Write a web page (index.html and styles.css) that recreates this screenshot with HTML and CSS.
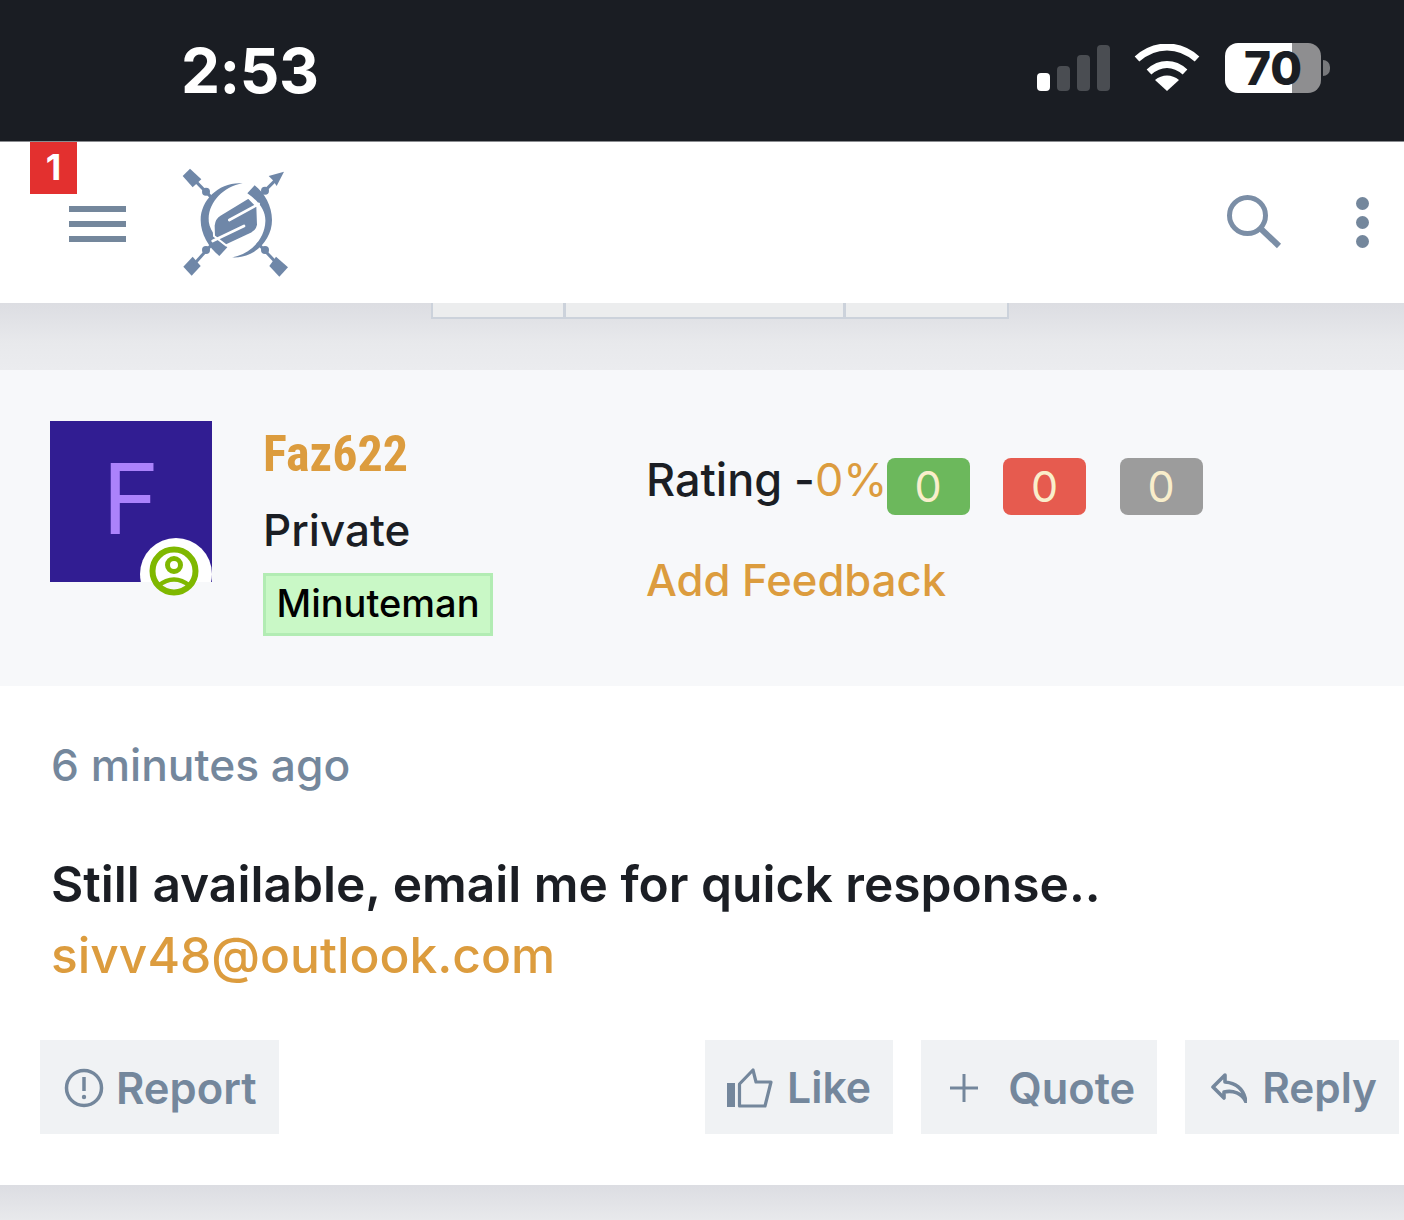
FILE: index.html
```html
<!DOCTYPE html>
<html>

<head>
	<meta charset="utf-8" />
	<title>Post</title>
	<link rel="stylesheet" href="styles.css">
</head>

<body>
	<!-- phone status bar -->
	<div class="status">
		<span class="clock">2:53</span>
		<div class="status-icons">
			<svg class="signal" width="74" height="46" viewBox="-1 0 74 46">
				<rect x="0" y="28" width="13" height="18" rx="4" fill="#fff" />
				<rect x="20" y="21" width="13" height="25" rx="4" fill="#4a4d52" />
				<rect x="40" y="10" width="13" height="36" rx="4" fill="#4a4d52" />
				<rect x="60" y="0" width="13" height="46" rx="4" fill="#4a4d52" />
			</svg>
			<svg class="wifi" width="66" height="48" viewBox="0 0 66 48">
				<path d="M3 15C21 -1 45 -1 63 15" fill="none" stroke="#fff" stroke-width="7" />
				<path d="M15 28C26 18 40 18 51 28" fill="none" stroke="#fff" stroke-width="7" />
				<path d="M33 47L21 36C28 30 38 30 45 36Z" fill="#fff" />
			</svg>
			<div class="battery">
				<div class="battery-body"><span>70</span></div>
				<div class="battery-tip"></div>
			</div>
		</div>
	</div>

	<!-- top nav -->
	<div class="nav">
		<div class="nav-left">
			<span class="badge">1</span>
			<div class="burger"><i></i><i></i><i></i></div>
			<svg class="logo" width="130" height="125" viewBox="0 0 390 375">
				<g fill="#6f87a8">
					<path d="M60 26L94 58L68 82L38 48Z" />
					<path d="M342 35L296 48L308 60L320 78Z" />
					<path d="M68 290L92 318L65 347L40 320Z" />
					<path d="M318 290L354 322L328 350L298 318Z" />
					<circle cx="108" cy="95" r="12" />
					<circle cx="285" cy="92" r="12" />
					<circle cx="108" cy="270" r="12" />
					<circle cx="285" cy="270" r="12" />
					<path d="M218 70C150 64 92 118 92 180C92 222 116 262 148 288L172 262C137 235 114 205 116 175C118 125 160 80 218 70Z" />
					<path d="M186 292C254 296 306 240 306 180C306 138 284 100 254 76L232 100C269 125 288 155 286 185C284 235 244 282 186 292Z" />
				</g>
				<g stroke="#6f87a8" stroke-width="9" fill="none">
					<path d="M75 62L130 118" />
					<path d="M315 62L262 115" />
					<path d="M70 315L130 248" />
					<path d="M325 315L262 248" />
				</g>
				<path d="M131 197Q133 175 150 165L235 113L262 140L264 195Q262 210 245 220L168 256L132 228Z" fill="#6f87a8" stroke="#fff" stroke-width="6" />
				<path d="M266 132L178 180M128 243L222 198" fill="none" stroke="#fff" stroke-width="8" stroke-linecap="round" />
			</svg>
		</div>
		<div class="nav-right">
			<svg width="56" height="54" viewBox="0 0 56 54">
				<circle cx="20.5" cy="20.5" r="18" fill="none" stroke="#7b8ea6" stroke-width="5" />
				<path d="M33 33L52 51" stroke="#7b8ea6" stroke-width="6" fill="none" />
			</svg>
			<div class="dots"><i></i><i></i><i></i></div>
		</div>
	</div>

	<!-- bit of the pager hidden under the nav, then the grey gap -->
	<div class="gap">
		<div class="pager"><i class="p1"></i><i class="p2"></i><i class="p3"></i></div>
	</div>

	<div class="post">
		<div class="author">
			<div class="avatar-wrap">
				<div class="avatar">
					<span>F</span>
					<div class="online-bg"></div>
				</div>
				<svg class="online-icon" width="50" height="50" viewBox="0 0 50 50">
					<circle cx="25" cy="25" r="21.5" fill="none" stroke="#7fb800" stroke-width="6" />
					<circle cx="25" cy="19" r="6.5" fill="none" stroke="#7fb800" stroke-width="5" />
					<path d="M9 40Q25 27 41 40" fill="none" stroke="#7fb800" stroke-width="4.5" />
				</svg>
			</div>
			<div class="who">
				<a class="name">Faz622</a>
				<div class="rank">Private</div>
				<span class="tag">Minuteman</span>
			</div>
			<div class="trust">
				<div class="rating">
					<span class="rate-text">Rating -<b>0%</b></span>
					<span class="count green">0</span>
					<span class="count red">0</span>
					<span class="count grey">0</span>
				</div>
				<a class="feedback">Add Feedback</a>
			</div>
		</div>

		<div class="body">
			<div class="time">6 minutes ago</div>
			<p class="msg">Still available, email me for quick response..<br><a>sivv48@outlook.com</a></p>
			<div class="actions">
				<a class="btn report">
					<svg width="40" height="40" viewBox="0 0 40 40">
						<circle cx="20" cy="20" r="17.5" fill="none" stroke="#74879c" stroke-width="3.5" />
						<path d="M20 9V23" stroke="#74879c" stroke-width="3.5" />
						<circle cx="20" cy="29" r="2.2" fill="#74879c" />
					</svg>
					Report
				</a>
				<div class="actions-right">
					<a class="btn like">
						<svg width="46" height="42" viewBox="0 0 46 42">
							<rect x="0" y="16" width="8" height="24" fill="#74879c" />
							<path d="M12.5 39V17L26 3L29 15H44L38 39Z" fill="none" stroke="#74879c" stroke-width="3.2" stroke-linejoin="round" />
						</svg>
						Like
					</a>
					<a class="btn quote">
						<svg width="30" height="30" viewBox="0 0 30 30">
							<path d="M15 1V29M1 15H29" stroke="#74879c" stroke-width="3" />
						</svg>
						Quote
					</a>
					<a class="btn reply">
						<svg width="36" height="30" viewBox="0 0 36 30">
							<path d="M14 2L2 14L13 25V19C22 17 31 20 35 29C33 16 25 10 14 9Z" fill="none" stroke="#74879c" stroke-width="3.6" stroke-linejoin="round" />
						</svg>
						Reply
					</a>
				</div>
			</div>
		</div>
	</div>

	<div class="bottom"></div>
</body>

</html>
```

FILE: styles.css
```css
* {
	margin: 0;
	padding: 0;
	box-sizing: border-box;
}

body {
	width: 1404px;
	height: 1220px;
	overflow: hidden;
	background: #fff;
	font-family: Inter, "Liberation Sans", sans-serif;
	color: #1b1e24;
}

a {
	text-decoration: none;
}

/* status bar */
.status {
	height: 142px;
	background: #1a1d23;
	border-bottom: 1px solid #8a8c90;
	display: flex;
	align-items: center;
	justify-content: space-between;
	padding: 0 74px 0 181px;
}

.clock {
	color: #fff;
	font-size: 62px;
	font-weight: 700;
	letter-spacing: -0.5px;
}

.status-icons {
	display: flex;
	align-items: center;
	gap: 25px;
	margin-bottom: 6px;
}

.signal {
	margin-right: -1px;
}

.battery {
	display: flex;
	align-items: center;
	gap: 2px;
}

.battery-body {
	width: 96px;
	height: 50px;
	border-radius: 13px;
	background: linear-gradient(90deg, #fff 70%, #8e8e90 70%);
	color: #1a1d23;
	font-size: 46px;
	font-weight: 800;
	line-height: 50px;
	text-align: center;
}

.battery-tip {
	width: 7px;
	height: 16px;
	border-radius: 0 8px 8px 0;
	background: #77787b;
}

/* nav */
.nav {
	height: 161px;
	background: #fff;
	display: flex;
	align-items: center;
	justify-content: space-between;
	padding: 0 35px 0 69px;
	position: relative;
	z-index: 2;
}

.nav-left {
	display: flex;
	align-items: center;
	gap: 44px;
}

.badge {
	position: absolute;
	left: 30px;
	top: 0;
	width: 47px;
	height: 52px;
	background: #e3302f;
	color: #fff;
	font-size: 36px;
	font-weight: 700;
	line-height: 51px;
	text-align: center;
}

.burger {
	width: 57px;
	display: flex;
	flex-direction: column;
	gap: 9px;
	margin-top: 3px;
}

.burger i {
	display: block;
	height: 6px;
	background: #74879c;
}

.nav-right {
	display: flex;
	align-items: center;
	gap: 73px;
}

.nav-right svg {
	margin-bottom: 2px;
}

.dots {
	display: flex;
	flex-direction: column;
	gap: 6px;
}

.dots i {
	display: block;
	width: 13px;
	height: 13px;
	border-radius: 50%;
	background: #74879c;
}

/* gap under nav */
.gap {
	height: 67px;
	background: linear-gradient(#dcdde2, #e8e9ec 60%, #ebecef);
	display: flex;
	justify-content: flex-start;
	padding-left: 431px;
}

.pager {
	display: flex;
	height: 16px;
	border: 2px solid #ccd2db;
	border-top: 0;
}

.pager i {
	display: block;
	background: #ecedee;
	border-right: 3px solid #ccd2db;
}

.p1 { width: 133px; }
.p2 { width: 280px; }
.p3 { width: 161px; border-right: 0 !important; }

/* post */
.author {
	height: 316px;
	background: #f7f8fa;
	display: flex;
	padding: 51px 0 0 50px;
}

.avatar-wrap {
	width: 162px;
	height: 161px;
	position: relative;
}

.avatar {
	width: 162px;
	height: 161px;
	background: #311d92;
	color: #ab82fb;
	font-size: 97px;
	line-height: 156px;
	text-align: center;
	overflow: hidden;
	position: relative;
}

.online-bg {
	position: absolute;
	left: 90px;
	top: 117px;
	width: 72px;
	height: 72px;
	border-radius: 50%;
	background: #fff;
}

.online-icon {
	position: absolute;
	left: 99px;
	top: 125px;
}

.who {
	width: 383px;
	margin-left: 51px;
}

.name {
	display: block;
	color: #dc9c3e;
	font-family: Roboto, sans-serif;
	font-stretch: condensed;
	font-size: 50px;
	font-weight: 700;
	line-height: 66px;
}

.rank {
	font-size: 44px;
	font-weight: 500;
	line-height: 48px;
	margin-top: 19px;
}

.tag {
	display: inline-block;
	margin-top: 19px;
	width: 230px;
	height: 63px;
	background: #c9f8c6;
	border: 3px solid #b2ecb3;
	color: #000;
	font-size: 38px;
	font-weight: 500;
	line-height: 55px;
	text-align: center;
}

.rating {
	display: flex;
	align-items: flex-start;
	margin-top: 37px;
}

.rate-text {
	font-size: 45px;
	font-weight: 500;
	line-height: 50px;
	white-space: nowrap;
	width: 240.5px;
	margin-top: -3px;
}

.rate-text b {
	color: #dc9c3e;
	font-weight: 400;
}

.count {
	width: 83px;
	height: 57px;
	border-radius: 8px;
	color: #f9eecb;
	font-size: 43px;
	line-height: 57px;
	text-align: center;
	margin-right: 33.5px;
}

.green { background: #6cb85c; }
.red { background: #e65b4f; }
.grey { background: #9c9c9c; }

.feedback {
	display: block;
	color: #dc9c3e;
	font-size: 43.6px;
	font-weight: 500;
	line-height: 50px;
	margin-top: 41px;
}

.body {
	height: 499px;
	padding: 54px 5px 0 40px;
}

.time {
	margin-left: 11px;
	color: #74879c;
	font-size: 44.3px;
	font-weight: 500;
	line-height: 50px;
}

.msg {
	margin: 59px 0 0 11px;
	font-size: 49.7px;
	font-weight: 600;
	line-height: 71px;
}

.msg a {
	color: #dc9c3e;
	font-weight: 500;
}

.actions {
	display: flex;
	justify-content: space-between;
	margin-top: 49px;
}

.actions-right {
	display: flex;
	gap: 28px;
}

.btn {
	height: 94px;
	background: #f0f2f4;
	color: #74879c;
	font-size: 43.5px;
	font-weight: 600;
	display: flex;
	align-items: center;
	gap: 12px;
	padding: 1px 22px 0 24px;
	white-space: nowrap;
}

.like { gap: 14px; padding: 1px 22px 0; font-size: 42.8px; }
.quote { gap: 29px; padding: 1px 22px 0 28px; font-size: 43.4px; }
.reply { gap: 15px; padding: 1px 22px 0 26px; font-size: 42.3px; }

.bottom {
	height: 35px;
	background: linear-gradient(#dcdde2, #e8e9ec);
}
```
